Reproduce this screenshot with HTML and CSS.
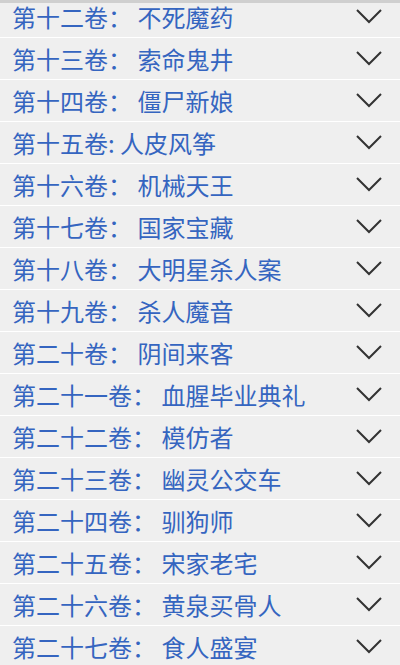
FILE: index.html
```html
<!DOCTYPE html>
<html lang="zh-CN">
<head>
    <meta charset="UTF-8">
    <meta name="viewport" content="width=device-width, initial-scale=1.0">
    <title>目录</title>
    <link rel="stylesheet" href="styles.css">
</head>
<body>

<div class="top-bar"></div>

<ul class="volume-list" id="volume-list"></ul>

<script>
    const volumes = [
        "第十二卷： 不死魔药",
        "第十三卷： 索命鬼井",
        "第十四卷： 僵尸新娘",
        "第十五卷: 人皮风筝",
        "第十六卷： 机械天王",
        "第十七卷： 国家宝藏",
        "第十八卷： 大明星杀人案",
        "第十九卷： 杀人魔音",
        "第二十卷： 阴间来客",
        "第二十一卷： 血腥毕业典礼",
        "第二十二卷： 模仿者",
        "第二十三卷： 幽灵公交车",
        "第二十四卷： 驯狗师",
        "第二十五卷： 宋家老宅",
        "第二十六卷： 黄泉买骨人",
        "第二十七卷： 食人盛宴"
    ];

    const list = document.getElementById("volume-list");
    const chevron = '<svg class="chevron" width="28" height="16" viewBox="0 0 28 16"><polyline points="2,2 14,14 26,2" fill="none" stroke="#333" stroke-width="2"/></svg>';

    volumes.forEach(name => {
        let li = document.createElement("li");
        li.classList.add("volume");
        li.innerHTML = `<span class="volume-title">${name}</span>${chevron}`;
        list.appendChild(li);
    });
</script>

</body>
</html>
```

FILE: styles.css
```css
body {
    font-family: "Noto Sans CJK SC", "Noto Sans", sans-serif;
    margin: 0;
    padding: 0;
    background-color: #efefef;
    overflow: hidden;
}

.top-bar {
    position: fixed;
    top: 0;
    left: 0;
    right: 0;
    height: 3px;
    background: #cfcfcf;
    z-index: 2;
}

.volume-list {
    list-style: none;
    margin: -4px 0 0 0;
    padding: 0;
}

.volume {
    display: flex;
    justify-content: space-between;
    align-items: center;
    height: 41px;
    padding: 0 17px 0 12px;
    border-bottom: 1px solid #ffffff;
}

.volume-title {
    color: #3565c0;
    font-size: 24px;
    line-height: 1;
    white-space: pre;
}

.chevron {
    display: block;
    margin-top: -2px;
}
```
